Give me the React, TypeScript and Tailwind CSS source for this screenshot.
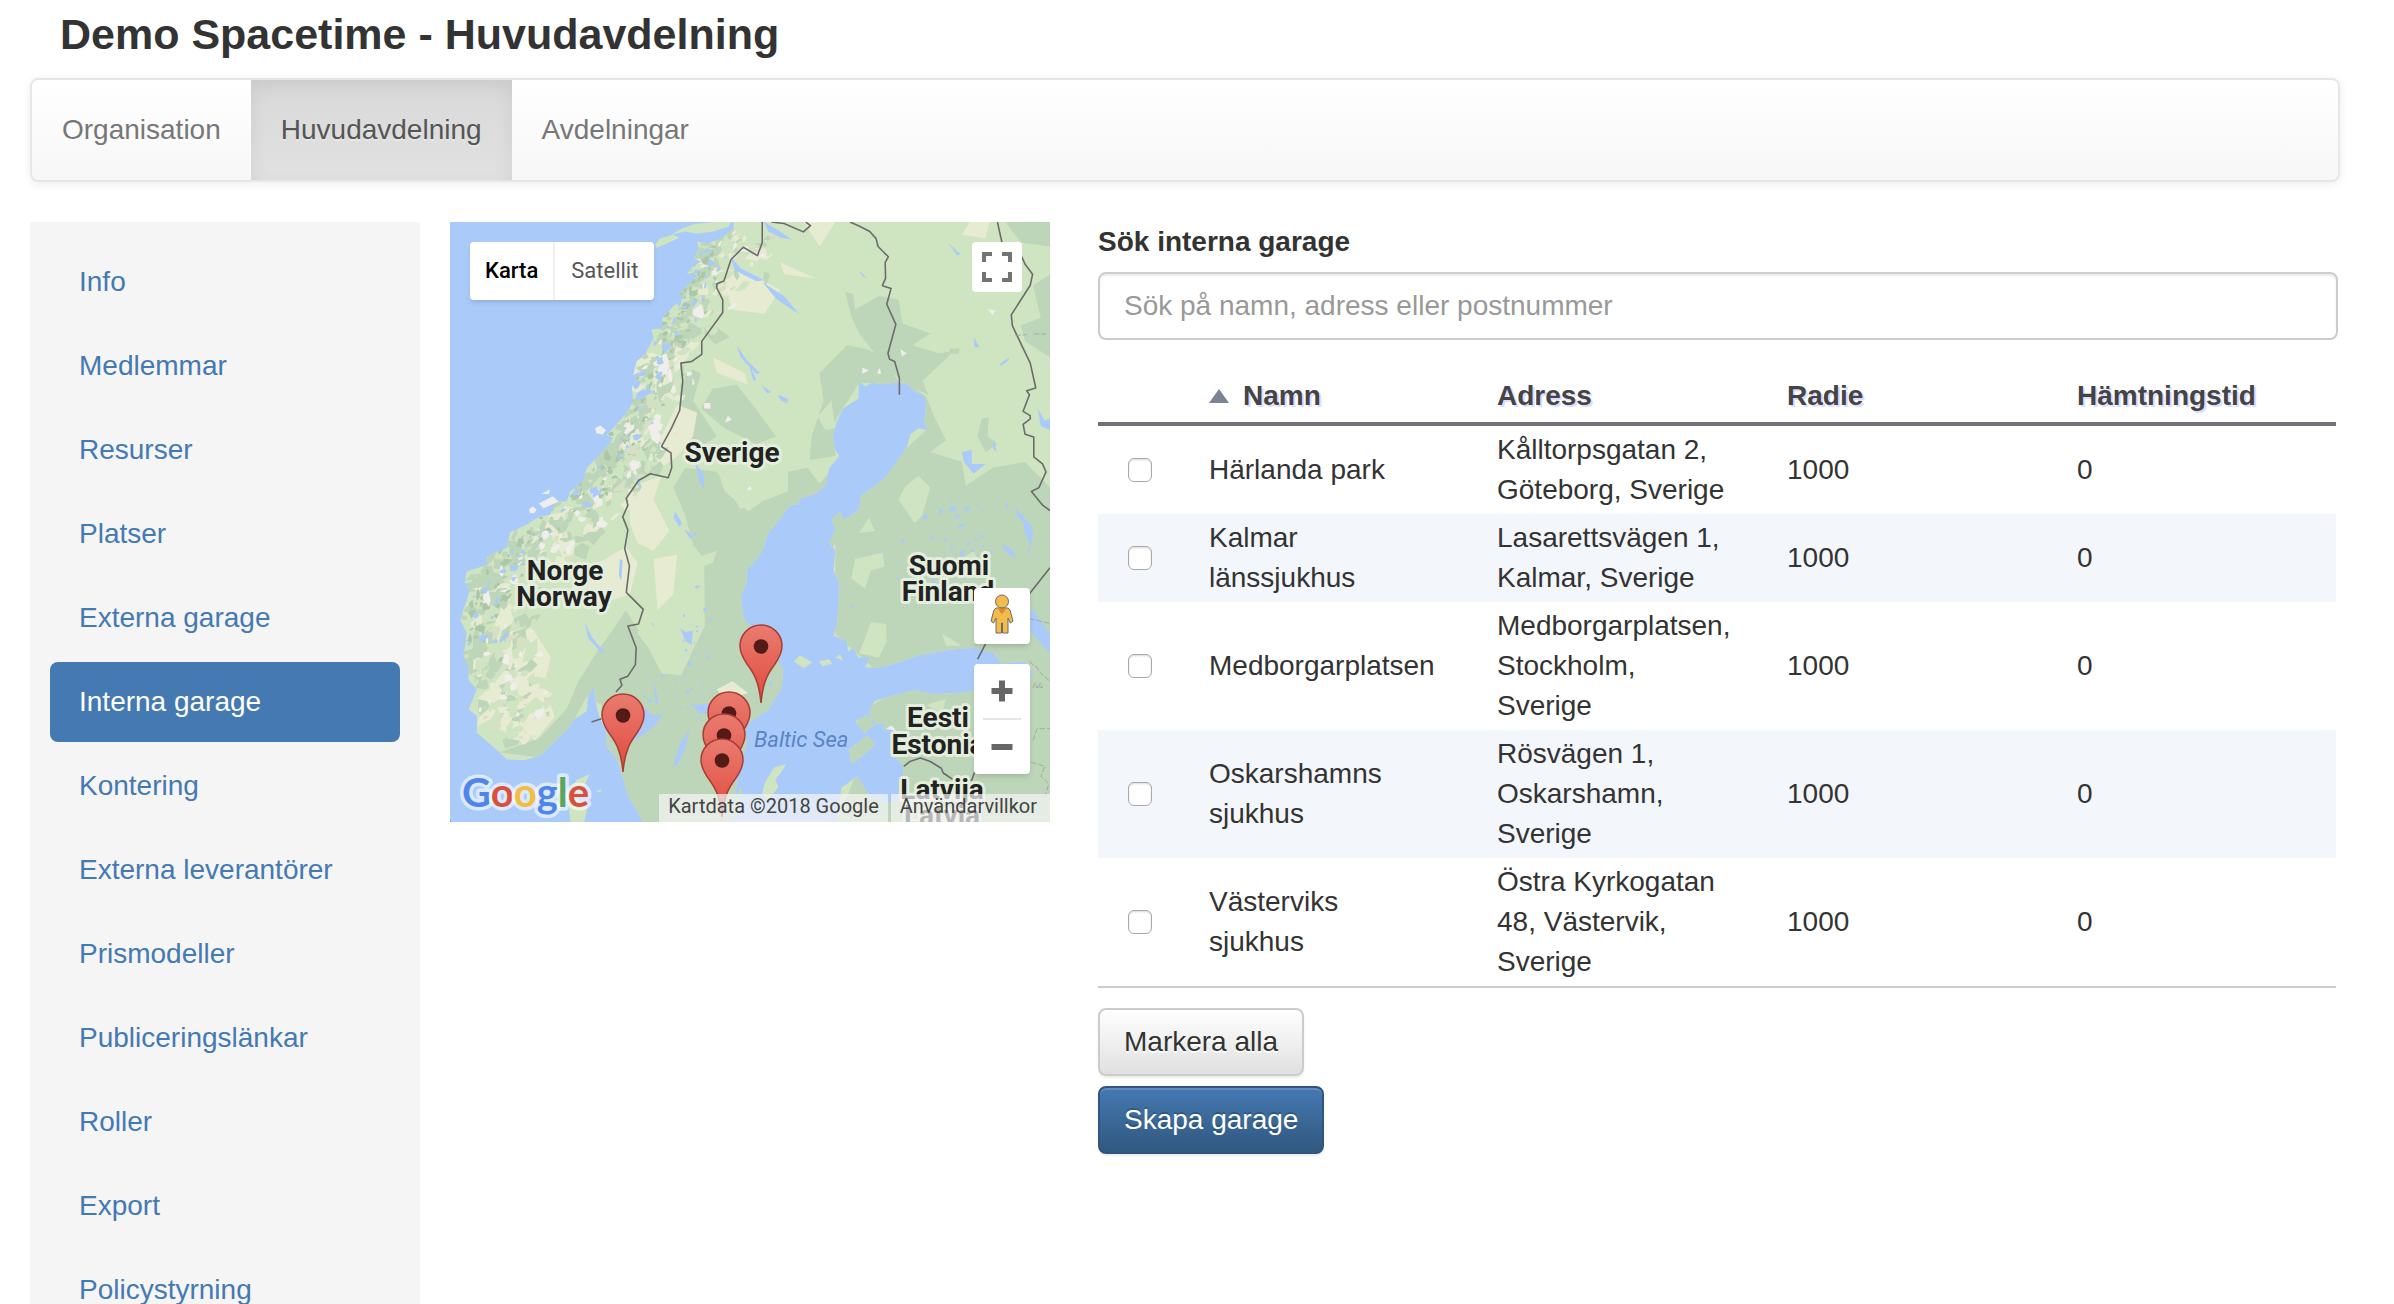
import { useState } from 'react';
import { Plus, Minus } from 'lucide-react';

const tabs = ['Organisation', 'Huvudavdelning', 'Avdelningar'];

const menuItems = [
  'Info',
  'Medlemmar',
  'Resurser',
  'Platser',
  'Externa garage',
  'Interna garage',
  'Kontering',
  'Externa leverantörer',
  'Prismodeller',
  'Publiceringslänkar',
  'Roller',
  'Export',
  'Policystyrning'
];

const garages = [
  { name: 'Härlanda park', address: 'Kålltorpsgatan 2, Göteborg, Sverige', radius: 1000, pickup: 0 },
  { name: 'Kalmar länssjukhus', address: 'Lasarettsvägen 1, Kalmar, Sverige', radius: 1000, pickup: 0 },
  { name: 'Medborgarplatsen', address: 'Medborgarplatsen, Stockholm, Sverige', radius: 1000, pickup: 0 },
  { name: 'Oskarshamns sjukhus', address: 'Rösvägen 1, Oskarshamn, Sverige', radius: 1000, pickup: 0 },
  { name: 'Västerviks sjukhus', address: 'Östra Kyrkogatan 48, Västervik, Sverige', radius: 1000, pickup: 0 }
];

// Tip of each pin, in map pixels
const pins = [
  { x: 311, y: 482 },
  { x: 279, y: 549 },
  { x: 173, y: 551 },
  { x: 274, y: 571 },
  { x: 272, y: 596 }
];

const LAND = [
  // Scandinavia and Finland
  'M742 18L742 34L712 59L680 72L650 68L655 85L641 110L660 118L640 130L624 148L653 152L628 177L603 202L618 208L590 232L561 262L565 286L535 290L540 312L518 354L497 371L489 405L506 396L485 438L489 472L468 506L438 540L421 556L438 565L413 598L371 640L362 674L329 700L320 725L295 725L278 758L244 767L219 784L177 803L169 843L118 864L120 885L67 902L63 931L75 950L51 1024L67 1058L63 1091L59 1117L72 1142L72 1176L93 1201L72 1251L93 1268L93 1310L143 1353L169 1378L211 1380L253 1369L278 1344L329 1294L337 1277L371 1256L375 1218L388 1192L396 1243L405 1277L421 1302L421 1344L447 1378L459 1412L476 1471L514 1536L728 1536L745 1480L756 1400L775 1340L772 1290L800 1272L830 1252L845 1228L865 1195L868 1150L842 1110L800 1060L768 1020L760 965L776 930L775 900L802 870L815 850L830 805L860 770L885 735L905 732L910 718L950 705L975 685L985 640L1010 610L1000 595L993 560L1005 520L1020 490L1058 465L1060 422L1076 434L1092 425L1120 428L1160 424L1185 430L1200 445L1225 458L1230 480L1225 526L1235 545L1210 540L1190 555L1180 590L1155 625L1130 660L1118 672L1095 690L1065 710L1060 745L1035 765L1020 770L1012 752L990 770L1000 795L985 830L1000 850L995 900L1010 930L1008 980L1005 1030L996 1064L1030 1080L1032 1105L1045 1095L1058 1120L1088 1118L1075 1145L1110 1145L1150 1135L1210 1115L1290 1100L1350 1095L1400 1108L1420 1135L1480 1130L1500 1165L1470 1195L1350 1205L1300 1210L1250 1212L1200 1203L1150 1215L1100 1230L1085 1255L1095 1290L1125 1285L1120 1302L1150 1300L1165 1310L1150 1370L1172 1395L1170 1470L1130 1490L1085 1470L1055 1420L1015 1450L1005 1536L1543 1536L1543 18Z',
  'M545 75L556 60L590 50L605 58L575 72L548 84Z M585 50L610 35L640 24L690 18L735 18L730 30L690 42L650 48L620 42Z',
  // Denmark
  'M330 1536L322 1470L345 1430L378 1415L365 1445L340 1470L372 1500L365 1536Z M395 1458L410 1452L405 1462Z',
  // Gotland, Öland, Åland, Saaremaa, Hiiumaa
  'M820 1440L845 1398L875 1390L868 1402L848 1430L856 1448L828 1482L815 1462Z M738 1520L758 1450L764 1460L745 1530Z',
  'M895 1130L910 1115L942 1132L920 1147Z M958 1130L985 1124L992 1136L968 1142Z M1000 1120L1012 1112L1020 1128Z',
  'M1035 1352L1080 1318L1102 1338L1076 1362L1040 1388Z M1050 1282L1078 1266L1104 1286L1074 1310Z'
].join(' ');

const FOREST = [
  'M400 1100L430 1060L470 1000L520 1080L560 1160L610 1165L640 1100L670 1040L668 870L640 835L620 760L590 690L620 640L700 650L760 745L880 700L880 650L930 640L960 680L1010 620L1020 800L880 1010L880 1300L780 1536L500 1536L420 1400L410 1240L370 1220L330 1294L250 1372L150 1360L250 1325L320 1250L350 1180Z',
  'M935 620L940 560L970 470L960 400L1030 330L1080 340L1120 360L1165 430L1060 425L1000 520L1000 610Z',
  'M1025 195L1045 200L1050 240L1110 205L1160 215L1170 275L1240 300L1195 330L1260 350L1300 345L1220 420L1235 455L1170 425L1100 350L1060 300L1040 255Z',
  'M1180 425L1230 460L1250 510L1280 570L1240 600L1320 625L1330 685L1375 655L1400 640L1480 625L1543 690L1543 1200L1350 1110L1100 1150L1000 1060L1000 760L1060 710L1180 590L1230 545Z',
  'M1020 1420L1060 1260L1160 1200L1220 1190L1340 1200L1543 1150L1543 1536L1005 1536L1050 1420L1120 1490L1175 1470Z',
  'M1430 18L1543 18L1543 80L1470 70Z M1500 180L1543 150L1543 360L1480 320L1470 280L1520 260Z M1370 515L1388 512L1385 560L1410 580L1380 600L1360 560Z M1290 338L1315 338L1310 352L1288 350Z',
  'M690 440L750 430L790 480L850 560L800 580L720 540L660 490Z M610 380L660 400L640 470L700 560L640 600L590 540L606 495Z'
].join(' ');

const MEADOW = [
  'M520 960L560 870L630 860L640 930L665 1010L620 1070L610 1150L560 1140L500 1060Z',
  'M720 700L780 750L850 700L850 610L780 600L700 640Z',
  'M640 870L700 850L690 880L650 895Z M955 510L990 470L1000 540L975 545Z',
  'M1050 870L1120 855L1125 890L1090 900L1075 945L1040 920Z M1090 1030L1128 1035L1130 1080L1110 1120L1060 1110Z',
  'M1175 690L1210 660L1240 690L1220 760L1200 780L1160 720Z M1070 790L1085 765L1100 800L1060 805Z',
  'M1320 870L1350 850L1370 890L1340 900Z M1230 1240L1280 1225L1270 1260Z M1270 1060L1320 1090L1280 1090Z'
].join(' ');

const FIELDS = [
  'M600 480L650 500L640 560L600 610L560 640L540 600Z',
  'M480 690L560 660L540 720L580 800L540 850L500 830L480 780Z',
  'M400 880L470 840L500 880L480 960L420 980L330 950L360 890Z',
  'M160 1060L230 1040L280 1120L260 1200L200 1260L150 1260L130 1200L170 1130Z',
  'M540 870L600 860L590 960L550 1000Z M700 130L790 150L860 190L820 250L740 240Z',
  'M210 1300L280 1240L290 1270L240 1330Z M690 360L770 400L780 430L700 400Z',
  'M860 120L950 160L870 150Z M920 18L1000 18L960 80Z M1340 18L1390 18L1380 60L1320 50Z M700 1200L740 1180L780 1210L720 1225Z'
].join(' ');

const LAKES = [
  'M485 1262L510 1240L540 1268L562 1264L545 1290L520 1312L486 1330L498 1292Z M590 1396L606 1340L632 1298L620 1350L600 1392Z',
  'M608 1045L620 1055L640 1052L636 1088L620 1078Z M595 750L612 780L606 790L590 765Z M618 795L640 812L632 820Z',
  'M750 330L778 370L810 400L800 402L760 360Z M812 430L838 448L828 452Z M855 455L880 465L878 476L862 470Z M780 370L800 418L792 420Z',
  'M815 170L870 205L908 250L890 240L850 212Z M735 105L760 135L820 165L800 168L745 140Z M645 625L668 660L668 695L655 670Z M820 18L858 40L890 62L862 58L830 42Z',
  'M1320 600L1345 595L1345 630L1380 630L1350 655L1325 625Z M1286 72L1318 100L1308 102Z M1415 378L1440 360L1438 368L1420 382Z M1512 490L1530 520L1543 515L1543 545L1520 535Z',
  'M1455 740L1480 770L1500 790L1490 792L1462 765Z M1420 830L1450 850L1455 870L1430 850Z M1475 770L1500 800L1495 840L1478 800Z M1260 740L1275 750L1265 760Z M1240 905L1260 940L1250 945Z',
  'M1465 1030L1490 1050L1543 1110L1543 1060L1500 1000L1480 1000Z M1060 140L1080 160L1068 155Z M1350 310L1365 335L1352 335Z M1400 565L1408 600L1398 590Z',
  'M455 870L462 875L458 925L452 912Z M500 660L510 690L500 685Z M365 1030L385 1070L415 1105L410 1110L375 1072Z M670 1100L685 1130L676 1122Z',
  'M540 1180L552 1230L545 1240Z M640 1240L700 1235L690 1262L655 1262Z'
].join(' ');

const BORDERS = [
  'M815 18L815 70L803 103L767 82L736 113L718 167L700 174L700 185L715 215L715 247L662 320L662 353L636 371L609 375L614 420L606 495L585 540L560 586L584 602L586 640L577 665L532 655L502 672L471 717L475 735L462 764L475 797L467 845L479 888L471 955L514 998L502 1035L475 1040L496 1095L494 1138L475 1167L455 1175L460 1190L445 1207',
  'M383 1283L408 1275',
  'M838 18L870 22L919 43L937 27L925 18',
  'M1037 18L1060 28L1087 42L1103 60L1108 80L1134 106L1126 120L1127 160L1119 179L1141 186L1130 226L1153 277L1133 350L1137 365L1150 371L1162 413L1162 455',
  'M1410 18L1421 68L1471 105L1480 125L1499 150L1493 178L1445 253L1448 281L1493 375L1507 438L1484 445L1491 455L1475 497L1493 508L1493 516L1475 530L1480 555L1502 562L1502 612L1524 630L1533 650L1515 690L1496 700L1525 735L1543 748',
  'M1543 893L1490 960L1380 1085L1360 1124',
  'M1173 1395L1190 1382L1215 1374L1240 1383L1268 1400L1273 1412L1300 1430L1345 1430L1352 1410'
].join(' ');

const createRandom = (start: number) => {
  let seed = start * 7919;
  return () => {
    seed = (seed * 16807) % 2147483647;
    return seed / 2147483647;
  };
};

// Scatters slanted shards of terrain along a ridge of [x, y, spread] points
const scatter = (start: number, ridge: number[][], count: number, size: number) => {
  const random = createRandom(start);
  let path = '';
  for (let i = 0; i < count; i++) {
    const at = random() * (ridge.length - 1);
    const index = Math.floor(at);
    const [ax, ay, aw] = ridge[index];
    const [bx, by, bw] = ridge[index + 1];
    const t = at - index;
    const width = aw + (bw - aw) * t;
    const x = ax + (bx - ax) * t + (random() + random() - 1) * width;
    const y = ay + (by - ay) * t + (random() + random() - 1) * 50;
    const long = size * (0.5 + random() * random() * 1.6);
    const short = long * (0.25 + random() * 0.4);
    const turn = -0.8 + (random() - 0.5) * 1.8;
    for (let k = 0; k < 5; k++) {
      const angle = k * 1.25 + random() * 0.9;
      const u = Math.cos(angle) * long * (0.4 + random() * 0.7);
      const v = Math.sin(angle) * short;
      const px = Math.round(x + u * Math.cos(turn) - v * Math.sin(turn));
      const py = Math.round(y + u * Math.sin(turn) + v * Math.cos(turn));
      path += `${k ? 'L' : 'M'}${px} ${py}`;
    }
    path += 'Z';
  }
  return path;
};

const RIDGE = [
  [780, 50, 110],
  [730, 130, 110],
  [650, 250, 100],
  [580, 370, 95],
  [550, 470, 80],
  [520, 570, 80],
  [450, 670, 90],
  [370, 760, 100],
  [260, 840, 130],
  [180, 920, 140],
  [160, 1010, 130],
  [160, 1110, 110],
  [190, 1220, 110],
  [190, 1310, 80]
];

const COAST = [
  [690, 70, 60],
  [650, 170, 50],
  [600, 280, 50],
  [540, 400, 50],
  [480, 560, 50],
  [390, 690, 50],
  [240, 820, 70],
  [130, 900, 70],
  [110, 1000, 80],
  [110, 1120, 60]
];

const INLAND = [
  [1300, 780, 220],
  [1400, 850, 140],
  [1250, 900, 200],
  [1400, 720, 140],
  [650, 1250, 110],
  [600, 1200, 120],
  [700, 800, 150]
];

const terrain = [
  { fill: '#bdd5b8', d: scatter(23, RIDGE, 130, 34) },
  { fill: '#e6ebd2', d: scatter(37, RIDGE, 120, 30) },
  { fill: '#cfe4c0', d: scatter(11, RIDGE, 170, 24) },
  { fill: '#bdd5b8', d: scatter(29, COAST, 190, 20) },
  { fill: '#abc6a8', d: scatter(41, COAST, 170, 11) },
  { fill: '#d9dfc4', d: scatter(43, RIDGE, 110, 13) },
  { fill: '#f0eeea', d: scatter(59, RIDGE, 80, 16) },
  { fill: '#aacbfa', d: scatter(67, COAST, 80, 12) },
  { fill: '#aacbfa', d: scatter(73, INLAND, 110, 7) }
];

const MapDrawing = () => (
  <svg viewBox="25 18 1518 1518" className="absolute inset-0 h-full w-full" aria-hidden="true">
    <defs>
      <clipPath id="land">
        <path d={LAND} />
      </clipPath>
    </defs>
    <rect x="25" y="18" width="1518" height="1518" fill="#aacbfa" />
    <path d={LAND} fill="#cfe4c0" />
    <g clipPath="url(#land)">
      <path d={FOREST} fill="#bdd5b8" />
      <path d={MEADOW} fill="#cfe4c0" />
      <path d={FIELDS} fill="#e6ebd2" />
      {terrain.map((layer, index) => (
        <path key={index} d={layer.d} fill={layer.fill} />
      ))}
      <path d={LAKES} fill="#aacbfa" />
    </g>
    <path
      d="M392 540L405 533L420 545L410 556L395 552Z M225 745L235 737L244 746L238 755L227 754Z M250 730L285 712L300 725L262 742Z M255 706L278 695L275 706Z M1128 1300L1142 1292L1155 1306Z M1385 238L1405 242L1398 254Z M1165 340L1180 350L1168 358Z M1068 386L1085 394L1068 402Z M668 476L684 476L684 490L668 490Z M728 508L738 518L720 526Z M783 685L790 694L775 697Z M1108 393L1112 388L1116 402L1106 402Z"
      fill="#f0eeea"
    />
    <path d={BORDERS} fill="none" stroke="#6b6b6b" strokeWidth="4" strokeLinejoin="round" />
    <path
      d="M1455 305L1484 303M1502 301L1533 301M1490 1022L1520 1028L1543 1034M1490 1130L1510 1145L1520 1160L1543 1180M1500 1330L1510 1300L1543 1300M1495 1385L1530 1395L1520 1420L1540 1440L1530 1470M1500 1195L1506 1183L1512 1196ZM1514 1196L1519 1184L1524 1196Z"
      fill="none"
      stroke="#9aa39a"
      strokeWidth="2"
      strokeDasharray="14 5"
    />
  </svg>
);

const halo = 'fill-[#222] stroke-[#e3eedd] stroke-[6px] [paint-order:stroke] [stroke-linejoin:round]';

const MapLabels = () => (
  <svg viewBox="0 0 600 600" className="absolute inset-0 h-full w-full font-[Roboto,sans-serif]">
    <g className={`text-[28px] font-bold ${halo}`} textAnchor="middle">
      <text x="282" y="240">Sverige</text>
      <text x="115" y="358">Norge</text>
      <text x="114" y="384">Norway</text>
      <text x="499" y="353">Suomi</text>
      <text x="498" y="379">Finland</text>
      <text x="488" y="505">Eesti</text>
      <text x="488" y="532">Estonia</text>
      <text x="492" y="577">Latvija</text>
      <text x="492" y="603">Latvia</text>
    </g>
    <text x="304" y="525" className="fill-[#5b83c6] text-[22px] italic">Baltic Sea</text>
    <text x="-12" y="612" className="fill-[#5b83c6] text-[22px] italic">Sea</text>
  </svg>
);

const Pins = () => (
  <svg viewBox="0 0 600 600" className="absolute inset-0 h-full w-full" aria-hidden="true">
    <defs>
      <linearGradient id="pin" x1="0" y1="0" x2="0" y2="1">
        <stop offset="0" stopColor="#ea7b70" />
        <stop offset="1" stopColor="#e04a3d" />
      </linearGradient>
    </defs>
    {pins.map((pin) => (
      <g key={`${pin.x}-${pin.y}`} transform={`translate(${pin.x - 22} ${pin.y - 80})`}>
        <path
          d="M22 1C10.400 1 1 10.400 1 22C1 29 4 34 8 40C14 48 20 56 22 79C24 56 30 48 36 40C40 34 43 29 43 22C43 10.400 33.600 1 22 1Z"
          fill="url(#pin)"
          stroke="#a83e33"
          strokeWidth="1.500"
        />
        <circle cx="22" cy="22.500" r="7.300" fill="#541a15" />
      </g>
    ))}
  </svg>
);

const GoogleLogo = () => (
  <svg viewBox="0 0 140 52" width="140" height="52" role="img" aria-label="Google">
    <text
      x="2"
      y="37"
      className="stroke-white/60 stroke-[7px] font-[Lato,sans-serif] text-[40px] font-bold [paint-order:stroke] [stroke-linejoin:round]"
    >
      <tspan fill="#5086ec">G</tspan>
      <tspan fill="#d85140">o</tspan>
      <tspan fill="#f2be42">o</tspan>
      <tspan fill="#5086ec">g</tspan>
      <tspan fill="#58a55c">l</tspan>
      <tspan fill="#d85140">e</tspan>
    </text>
  </svg>
);

const Pegman = () => (
  <svg viewBox="0 0 24 40" width="24" height="40" aria-hidden="true" stroke="#6b6b6b" strokeWidth="1" fill="#f2bc4a">
    <path d="M6 14L18 14L20 16L23 27L20.500 29L18 24L18 39L12.500 39L12.500 29L11.500 29L11.500 39L6 39L6 24L3.500 29L1 27L4 16Z" />
    <path d="M7.500 14L16.500 14L12 20.500Z" fill="#dc8a3c" stroke="none" />
    <circle cx="12" cy="7.500" r="6.500" />
  </svg>
);

const GarageMap = () => (
  <div className="relative h-[600px] w-[600px] shrink-0 overflow-hidden font-[Roboto,sans-serif]">
    <MapDrawing />
    <MapLabels />
    <Pins />
    <div className="absolute top-5 left-5 flex h-[58px] overflow-hidden rounded-sm bg-white text-[22px] shadow-md">
      <button className="border-r-2 border-[#f0f0f0] px-[15px] font-medium text-black">Karta</button>
      <button className="px-4 text-[#565656]">Satellit</button>
    </div>
    <button
      aria-label="Helskärm"
      className="absolute top-5 right-7 flex h-[50px] w-[50px] items-center justify-center rounded-sm bg-white"
    >
      <svg viewBox="0 0 30 30" width="30" height="30" fill="none" stroke="#737373" strokeWidth="4">
        <path d="M2 10V2H10M20 2H28V10M28 20V28H20M10 28H2V20" />
      </svg>
    </button>
    <div className="absolute right-5 bottom-12 flex w-14 flex-col gap-5">
      <button aria-label="Street View" className="flex h-14 items-center justify-center rounded-sm bg-white pb-1 shadow-md">
        <Pegman />
      </button>
      <div className="flex h-[110px] flex-col items-center rounded-sm bg-white shadow-md">
        <button aria-label="Zooma in" className="flex h-[54px] items-center justify-center">
          <Plus size={36} strokeWidth={4} strokeLinecap="butt" color="#666" />
        </button>
        <div className="h-[2px] w-[38px] bg-[#e6e6e6]" />
        <button aria-label="Zooma ut" className="flex h-[54px] items-center justify-center">
          <Minus size={36} strokeWidth={4} strokeLinecap="butt" color="#666" />
        </button>
      </div>
    </div>
    <a href="#google" className="absolute bottom-0 left-[10px]">
      <GoogleLogo />
    </a>
    <div className="absolute right-0 bottom-0 flex gap-[3px] text-[20px] leading-6 whitespace-nowrap text-[#444]">
      <span className="bg-[#f5f5f5]/70 px-[9px] pb-1">Kartdata ©2018 Google</span>
      <a href="#villkor" className="bg-[#f5f5f5]/70 pr-[13px] pb-1 pl-[9px]">Användarvillkor</a>
    </div>
  </div>
);

const GarageTable = () => {
  const [selected, setSelected] = useState<string[]>([]);
  const [query, setQuery] = useState('');
  const [ascending, setAscending] = useState(true);

  const toggle = (name: string) => {
    setSelected(selected.includes(name) ? selected.filter((item) => item !== name) : [...selected, name]);
  };

  const rows = garages
    .filter((garage) => `${garage.name} ${garage.address}`.toLowerCase().includes(query.toLowerCase()))
    .sort((a, b) => (ascending ? 1 : -1) * a.name.localeCompare(b.name, 'sv'));

  const headCell = 'border-b-4 border-[#6f7177] px-[15px] py-[6px] text-left font-bold text-[#444] [text-shadow:2px_2px_#ddf]';

  return (
    <section className="min-w-0 flex-1">
      <label htmlFor="search" className="mb-[10px] block font-bold">Sök interna garage</label>
      <input
        id="search"
        type="text"
        value={query}
        onChange={(event) => setQuery(event.target.value)}
        placeholder="Sök på namn, adress eller postnummer"
        className="block h-[68px] w-full rounded-lg border-2 border-[#ccc] bg-white px-6 shadow-[inset_0_2px_2px_rgba(0,0,0,0.075)] placeholder:text-[#999]"
      />
      <div className="mt-[30px] pr-[2px]">
        <table className="w-full table-fixed border-separate border-spacing-0 border-b-2 border-[#ccc]">
          <colgroup>
            <col className="w-24" />
            <col className="w-[288px]" />
            <col className="w-[290px]" />
            <col className="w-[290px]" />
            <col />
          </colgroup>
          <thead>
            <tr>
              <th className={headCell} aria-label="Välj" />
              <th className={headCell}>
                <button
                  className="flex items-center gap-3 [text-shadow:inherit]"
                  onClick={() => setAscending(!ascending)}
                >
                  <svg
                    viewBox="0 0 22 14"
                    width="22"
                    height="14"
                    aria-hidden="true"
                    className={ascending ? '' : 'rotate-180'}
                  >
                    <path d="M0 14L10 0L20 14Z" fill="#7b8491" />
                  </svg>
                  Namn
                </button>
              </th>
              <th className={headCell}>Adress</th>
              <th className={headCell}>Radie</th>
              <th className={headCell}>Hämtningstid</th>
            </tr>
          </thead>
          <tbody>
            {rows.map((garage) => (
              <tr key={garage.name} className="even:bg-[#f3f7fc]">
                <td className="px-[30px] py-1">
                  <input
                    type="checkbox"
                    aria-label={garage.name}
                    checked={selected.includes(garage.name)}
                    onChange={() => toggle(garage.name)}
                    className="block h-6 w-6 appearance-none rounded-md border border-[#aaa] bg-white shadow-[inset_0_1px_2px_rgba(0,0,0,0.15)] checked:bg-[#4479b2]"
                  />
                </td>
                <td className="py-1 pr-[45px] pl-[15px]">{garage.name}</td>
                <td className="py-1 pr-[37px] pl-[15px]">{garage.address}</td>
                <td className="px-[15px] py-1">{garage.radius}</td>
                <td className="px-[15px] py-1">{garage.pickup}</td>
              </tr>
            ))}
          </tbody>
        </table>
      </div>
      <div className="mt-5 flex flex-col items-start gap-[10px]">
        <button
          onClick={() => setSelected(garages.map((garage) => garage.name))}
          className="h-[68px] rounded-lg border-2 border-[#ccc] bg-linear-to-b from-white to-[#e0e0e0] px-6 shadow-[0_2px_2px_rgba(0,0,0,0.075)] [text-shadow:0_2px_0_#fff]"
        >
          Markera alla
        </button>
        <button className="h-[68px] rounded-lg border-2 border-[#2f5580] bg-linear-to-b from-[#4479b2] to-[#31587f] px-6 text-white shadow-[inset_0_2px_0_rgba(255,255,255,0.15),0_2px_2px_rgba(0,0,0,0.075)] [text-shadow:0_-2px_0_rgba(0,0,0,0.2)]">
          Skapa garage
        </button>
      </div>
    </section>
  );
};

const App = () => {
  const [activeTab, setActiveTab] = useState('Huvudavdelning');
  const [activeItem, setActiveItem] = useState('Interna garage');

  return (
    <div className="h-screen overflow-hidden bg-white pt-[10px] pr-14 pl-[30px] font-['Liberation_Sans',Arial,sans-serif] text-[28px] leading-10 text-[#333]">
      <h1 className="mb-5 pl-[30px] text-[43px] leading-[48px] font-bold">Demo Spacetime - Huvudavdelning</h1>

      <nav className="-mr-[2px] mb-10 flex h-[104px] rounded-lg border-2 border-[#e7e7e7] bg-linear-to-b from-white to-[#f7f7f7] shadow-[0_2px_10px_rgba(0,0,0,0.075)]">
        {tabs.map((tab) => (
          <a
            key={tab}
            href={`#${tab}`}
            onClick={() => setActiveTab(tab)}
            className={`px-[30px] py-[30px] [text-shadow:0_2px_0_rgba(255,255,255,0.25)] ${
              activeTab === tab
                ? 'bg-linear-to-b from-[#d9d9d9] to-[#e1e1e1] text-[#555] shadow-[inset_0_6px_18px_rgba(0,0,0,0.075)]'
                : 'text-[#777]'
            }`}
          >
            {tab}
          </a>
        ))}
      </nav>

      <div className="flex items-start">
        <aside className="mr-[30px] flex w-[390px] shrink-0 flex-col gap-1 bg-[#f5f5f5] p-5">
          {menuItems.map((item) => (
            <a
              key={item}
              href={`#${item}`}
              onClick={() => setActiveItem(item)}
              className={`rounded-lg px-[29px] py-5 ${
                activeItem === item ? 'bg-[#4479b2] text-white' : 'text-[#4479b2]'
              }`}
            >
              {item}
            </a>
          ))}
        </aside>
        <div className="mr-12 shrink-0">
          <GarageMap />
        </div>
        <GarageTable />
      </div>
    </div>
  );
};

export default App;
